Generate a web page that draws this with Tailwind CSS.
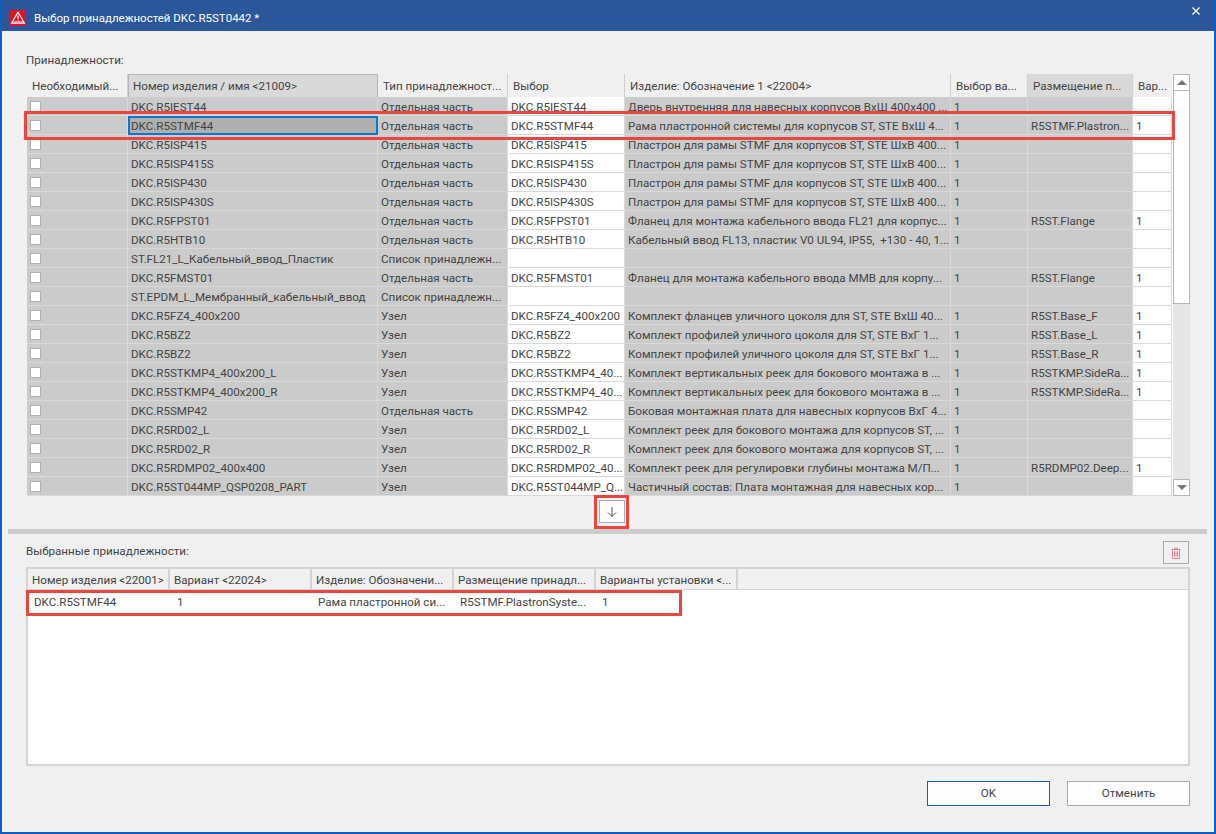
<!DOCTYPE html>
<html lang="ru">
<head>
  <meta charset="UTF-8" />
  <title>Выбор принадлежностей</title>
  <script src="https://cdn.jsdelivr.net/npm/@tailwindcss/browser@4"></script>
</head>
<body class="bg-[#f0f0f0] text-[#444444] text-[11.6px] font-['Roboto','Open_Sans',sans-serif] overflow-hidden">
  <div class="relative w-[1216px] h-[834px] flex flex-col border-l-[2px] border-r-[2px] border-b-[2px] border-[#0a5fc0]">
    <!-- Title bar -->
    <header class="h-[31px] shrink-0 bg-[#2b579a] text-white flex items-center pt-[5px] pl-[8px] pr-[8px]">
      <svg class="w-[16px] h-[16px] shrink-0" viewBox="0 0 16 16">
        <rect width="16" height="16" fill="#e30f24" />
        <path d="M8 2.2 L14.4 13.2 H1.6 Z" fill="#e30f24" stroke="#fff" stroke-width="1.2" />
        <path d="M3.2 11.2 H12.8 V12.7 H3.2 Z" fill="#f7b4bc" />
        <path d="M8 5.5 V8.8 M8 9.6 V10.8" stroke="#fff" stroke-width="1.2" />
      </svg>
      <span class="ml-[8px] mt-[1px] text-[11.5px]">Выбор принадлежностей DKC.R5ST0442 *</span>
      <svg class="ml-auto mb-[14px] mr-[6px] w-[8px] h-[8px]" viewBox="0 0 8 8"><path d="M0.5 0.5 L7.5 7.5 M7.5 0.5 L0.5 7.5" stroke="#fff" stroke-width="1.4" /></svg>
    </header>

    <!-- Upper part -->
    <section class="pl-[25px] pr-[24px]">
      <div class="h-[43px] pt-[21px] ml-[-1px] leading-[16px]">Принадлежности:</div>
      <div class="flex w-[1163px] h-[422px] bg-white">
        <div class="w-[1145px]">
          <div class="grid grid-cols-[101px_250px_130px_117px_326px_77px_105px_39px] h-[23px] bg-[#f0f0f0]">
            <div class="px-[5px] leading-[24px] whitespace-nowrap border-r border-b border-[#cfcfcf] bg-[#f0f0f0]">Необходимый...</div>
            <div class="pl-[4px] leading-[22px] whitespace-nowrap border border-[#b5b5b5] bg-[#d9d9d9]">Номер изделия / имя &lt;21009&gt;</div>
            <div class="px-[5px] leading-[24px] whitespace-nowrap border-r border-b border-[#cfcfcf]">Тип принадлежност...</div>
            <div class="px-[5px] leading-[24px] whitespace-nowrap border-r border-b border-[#cfcfcf]">Выбор</div>
            <div class="px-[5px] leading-[24px] whitespace-nowrap border-r border-b border-[#cfcfcf]">Изделие: Обозначение 1 &lt;22004&gt;</div>
            <div class="px-[5px] leading-[24px] whitespace-nowrap border-r border-b border-[#cfcfcf]">Выбор ва...</div>
            <div class="px-[5px] leading-[24px] whitespace-nowrap border-r border-b border-[#cfcfcf] bg-[#d9d9d9]">Размещение п...</div>
            <div class="px-[5px] leading-[24px] whitespace-nowrap border-b border-[#cfcfcf]">Вар...</div>
          </div>
          <div id="rows"></div>
        </div>
        <!-- Scrollbar -->
        <div class="w-[17px] ml-[1px] flex flex-col bg-[#e6e6e6]">
          <div class="h-[17px] bg-white border border-[#b5b5b5] flex items-center justify-center">
            <div class="w-0 h-0 border-l-[5px] border-r-[5px] border-b-[5px] border-l-transparent border-r-transparent border-b-[#777777]"></div>
          </div>
          <div class="h-[213px] bg-white border-x border-b border-[#b5b5b5]"></div>
          <div class="flex-1"></div>
          <div class="h-[17px] bg-white border border-[#b5b5b5] flex items-center justify-center">
            <div class="w-0 h-0 border-l-[5px] border-r-[5px] border-t-[5px] border-l-transparent border-r-transparent border-t-[#777777]"></div>
          </div>
        </div>
      </div>
      <div class="h-[33px] pt-[4px] pl-[572px]">
        <button class="w-[26px] h-[23px] bg-[#fdfdfd] border border-[#ababab] flex items-center justify-center">
          <svg class="w-[10px] h-[10px]" viewBox="0 0 10 10" fill="none" stroke="#555" stroke-width="1"><path d="M5 0 V9.5 M1 5.5 L5 9.5 L9 5.5" /></svg>
        </button>
      </div>
    </section>

    <!-- Splitter -->
    <div class="h-[5px] ml-[6px] mr-[7px] bg-[#cccccc] shrink-0"></div>

    <!-- Lower part -->
    <section class="pl-[24px] pr-[24px] flex-1 flex flex-col">
      <div class="h-[33px] flex items-start justify-between">
        <span class="leading-[16px] mt-[9px]">Выбранные принадлежности:</span>
        <button class="w-[26px] h-[23px] mt-[7px] mr-[1px] bg-[#f0f0f0] border border-[#ababab] flex items-center justify-center">
          <svg class="w-[10px] h-[12px]" viewBox="0 0 10 12" fill="none" stroke="#f0808f" stroke-width="1"><path d="M0.5 2.5 H9.5 M3.5 2.5 V1 H6.5 V2.5 M1.5 2.5 V11.5 H8.5 V2.5 M3.5 4.5 V9.5 M5 4.5 V9.5 M6.5 4.5 V9.5" /></svg>
        </button>
      </div>
      <div class="w-[1164px] h-[199px] bg-white border-2 border-[#d4d4d4]">
        <div class="flex h-[21px] bg-[#f0f0f0]">
          <div class="w-[142px] pl-[4px] leading-[23px] whitespace-nowrap border-r-[2px] border-b border-[#d4d4d4]">Номер изделия &lt;22001&gt;</div>
          <div class="w-[142px] pl-[4px] leading-[23px] whitespace-nowrap border-r-[2px] border-b border-[#d4d4d4]">Вариант &lt;22024&gt;</div>
          <div class="w-[142px] pl-[4px] leading-[23px] whitespace-nowrap border-r-[2px] border-b border-[#d4d4d4]">Изделие: Обозначени...</div>
          <div class="w-[142px] pl-[4px] leading-[23px] whitespace-nowrap border-r-[2px] border-b border-[#d4d4d4]">Размещение принадл...</div>
          <div class="w-[142px] pl-[4px] leading-[23px] whitespace-nowrap border-r-[2px] border-b border-[#d4d4d4]">Варианты установки &lt;...</div>
          <div class="flex-1 border-b border-[#d4d4d4]"></div>
        </div>
        <div class="flex h-[22px] leading-[25px]">
          <div class="w-[142px] pl-[6px] whitespace-nowrap">DKC.R5STMF44</div>
          <div class="w-[142px] pl-[7px] whitespace-nowrap">1</div>
          <div class="w-[142px] pl-[6px] whitespace-nowrap">Рама пластронной си...</div>
          <div class="w-[142px] pl-[6px] whitespace-nowrap">R5STMF.PlastronSyste...</div>
          <div class="w-[142px] pl-[6px] whitespace-nowrap">1</div>
        </div>
      </div>
      <div class="flex justify-end gap-[17px] mt-[15px]">
        <button class="w-[123px] h-[25px] bg-[#fdfdfd] border border-[#0a62c4]">OK</button>
        <button class="w-[123px] h-[25px] bg-[#fdfdfd] border border-[#ababab]">Отменить</button>
      </div>
    </section>

    <!-- Red annotation frames over the dialog -->
    <div class="absolute left-[22px] top-[111px] w-[1151px] h-[29px] border-[3px] border-[#ea4640]"></div>
    <div class="absolute left-[592px] top-[495px] w-[35px] h-[34px] border-[3px] border-[#ea4640]"></div>
    <div class="absolute left-[24px] top-[590px] w-[656px] h-[26px] border-[3px] border-[#ea4640]"></div>
  </div>

  <script>
    // name, type, choice, description, placement, variant
    const rows = [
      ['DKC.R5IEST44', 'Отдельная часть', 'DKC.R5IEST44', 'Дверь внутренняя для навесных корпусов ВхШ 400x400 ...', '', ''],
      ['DKC.R5STMF44', 'Отдельная часть', 'DKC.R5STMF44', 'Рама пластронной системы для корпусов ST, STE ВхШ 4...', 'R5STMF.Plastron...', '1'],
      ['DKC.R5ISP415', 'Отдельная часть', 'DKC.R5ISP415', 'Пластрон для рамы STMF для корпусов ST, STE ШхВ 400...', '', ''],
      ['DKC.R5ISP415S', 'Отдельная часть', 'DKC.R5ISP415S', 'Пластрон для рамы STMF для корпусов ST, STE ШхВ 400...', '', ''],
      ['DKC.R5ISP430', 'Отдельная часть', 'DKC.R5ISP430', 'Пластрон для рамы STMF для корпусов ST, STE ШхВ 400...', '', ''],
      ['DKC.R5ISP430S', 'Отдельная часть', 'DKC.R5ISP430S', 'Пластрон для рамы STMF для корпусов ST, STE ШхВ 400...', '', ''],
      ['DKC.R5FPST01', 'Отдельная часть', 'DKC.R5FPST01', 'Фланец для монтажа кабельного ввода FL21 для корпус...', 'R5ST.Flange', '1'],
      ['DKC.R5HTB10', 'Отдельная часть', 'DKC.R5HTB10', 'Кабельный ввод FL13, пластик V0 UL94, IP55,  +130 - 40, 1...', '', ''],
      ['ST.FL21_L_Кабельный_ввод_Пластик', 'Список принадлежн...', '', '', '', ''],
      ['DKC.R5FMST01', 'Отдельная часть', 'DKC.R5FMST01', 'Фланец для монтажа кабельного ввода MMB для корпу...', 'R5ST.Flange', '1'],
      ['ST.EPDM_L_Мембранный_кабельный_ввод', 'Список принадлежн...', '', '', '', ''],
      ['DKC.R5FZ4_400x200', 'Узел', 'DKC.R5FZ4_400x200', 'Комплект фланцев уличного цоколя для ST, STE ВхШ 40...', 'R5ST.Base_F', '1'],
      ['DKC.R5BZ2', 'Узел', 'DKC.R5BZ2', 'Комплект профилей уличного цоколя для ST, STE ВхГ 1...', 'R5ST.Base_L', '1'],
      ['DKC.R5BZ2', 'Узел', 'DKC.R5BZ2', 'Комплект профилей уличного цоколя для ST, STE ВхГ 1...', 'R5ST.Base_R', '1'],
      ['DKC.R5STKMP4_400x200_L', 'Узел', 'DKC.R5STKMP4_40...', 'Комплект вертикальных реек для бокового монтажа в ...', 'R5STKMP.SideRa...', '1'],
      ['DKC.R5STKMP4_400x200_R', 'Узел', 'DKC.R5STKMP4_40...', 'Комплект вертикальных реек для бокового монтажа в ...', 'R5STKMP.SideRa...', '1'],
      ['DKC.R5SMP42', 'Отдельная часть', 'DKC.R5SMP42', 'Боковая монтажная плата для навесных корпусов ВхГ 4...', '', ''],
      ['DKC.R5RD02_L', 'Узел', 'DKC.R5RD02_L', 'Комплект реек для бокового монтажа для корпусов ST, ...', '', ''],
      ['DKC.R5RD02_R', 'Узел', 'DKC.R5RD02_R', 'Комплект реек для бокового монтажа для корпусов ST, ...', '', ''],
      ['DKC.R5RDMP02_400x400', 'Узел', 'DKC.R5RDMP02_40...', 'Комплект реек для регулировки глубины монтажа М/П...', 'R5RDMP02.Deep...', '1'],
      ['DKC.R5ST044MP_QSP0208_PART', 'Узел', 'DKC.R5ST044MP_Q...', 'Частичный состав: Плата монтажная для навесных кор...', '', '']
    ];

    const grayCell = 'h-[19px] pl-[3px] leading-[20px] whitespace-pre overflow-hidden bg-[#cbcbcb] border-r border-b border-[#d9d9d9]';
    const whiteCell = 'h-[19px] pl-[3px] leading-[20px] whitespace-pre overflow-hidden bg-white border-r border-b border-[#d9d9d9]';
    const activeCell = 'h-[19px] pl-[1px] leading-[16px] whitespace-pre overflow-hidden bg-[#afafaf] border-[2px] border-[#0a78d0]';

    const host = document.getElementById('rows');
    rows.forEach((r, i) => {
      const row = document.createElement('div');
      row.className = 'grid grid-cols-[101px_250px_130px_117px_326px_77px_105px_39px]';
      const cell = (cls, text) => {
        const el = document.createElement('div');
        el.className = cls;
        el.textContent = text;
        row.appendChild(el);
      };
      const box = document.createElement('div');
      box.className = grayCell;
      box.innerHTML = '<div class="w-[11px] h-[11px] mt-[4px] bg-white border border-[#b0b0b0]"></div>';
      row.appendChild(box);
      cell(i === 1 ? activeCell : grayCell, r[0]);
      cell(grayCell, r[1]);
      cell(whiteCell, r[2]);
      cell(grayCell, r[3]);
      cell(grayCell, r[3] ? '1' : '');
      cell(grayCell, r[4]);
      cell(whiteCell, r[5]);
      host.appendChild(row);
    });
  </script>
</body>
</html>
